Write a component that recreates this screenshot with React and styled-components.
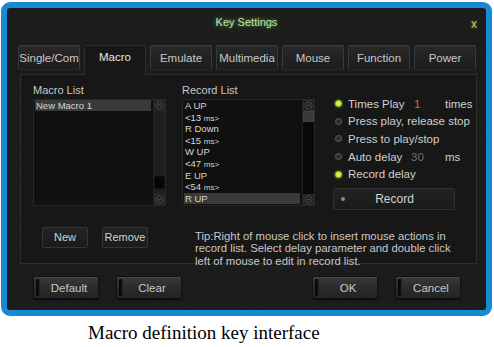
import styled, { createGlobalStyle } from 'styled-components'

const GlobalStyle = createGlobalStyle`
  html, body {
    margin: 0;
    padding: 0;
    background: #fff;
  }
  body {
    font-family: "Liberation Sans", Arial, sans-serif;
  }
`

const Page = styled.div`
  width: 494px;
  height: 347px;
  overflow: hidden;
  background: #fff;
`

const Frame = styled.div`
  margin: 2px 0 0 1px;
  width: 479px;
  height: 302px;
  border: 6px solid #1a89d4;
  border-radius: 9px;
  background-color: #1b1b1b;
  background-image: repeating-linear-gradient(45deg, rgba(255,255,255,0.012) 0 1px, transparent 1px 3px);
  display: flex;
  flex-direction: column;
  color: #d4d4d4;
`

const TitleBar = styled.div`
  display: grid;
  grid-template-columns: 1fr auto 1fr;
  height: 37px;
  padding-top: 8px;
  box-sizing: border-box;
`

const Title = styled.div`
  grid-column: 2;
  font-size: 11px;
  line-height: 12px;
  color: #c6dcb4;
  text-shadow: 0 0 6px rgba(110, 190, 50, 0.8), 0 0 2px rgba(90, 160, 40, 0.6);
`

const Close = styled.div`
  grid-column: 3;
  justify-self: end;
  margin: 2px 9px 0 0;
  font-size: 12px;
  line-height: 12px;
  color: #b4d83a;
  text-shadow: 0 0 3px rgba(150, 200, 40, 0.6);
`

const TabRow = styled.div`
  display: flex;
  align-items: flex-start;
  gap: 4px;
  height: 30px;
  padding-left: 11px;
  position: relative;
  z-index: 1;
`

const Tab = styled.div`
  width: 62px;
  height: ${p => (p.$active ? '31px' : '25px')};
  box-sizing: border-box;
  display: flex;
  align-items: ${p => (p.$active ? 'flex-start' : 'center')};
  padding-top: ${p => (p.$active ? '5px' : '0')};
  justify-content: center;
  font-size: 11.5px;
  color: ${p => (p.$active ? '#e6e6e6' : '#c8c8c8')};
  border: 1px solid ${p => (p.$active ? '#2e2e2e' : '#3a3a3a')};
  border-bottom: ${p => (p.$active ? 'none' : '1px solid #2a2a2a')};
  border-radius: 2px 2px ${p => (p.$active ? '0 0' : '2px 2px')};
  background: ${p => (p.$active ? '#171717' : 'linear-gradient(#282828, #1c1c1c)')};
  box-shadow: ${p => (p.$active ? 'none' : 'inset 0 1px 0 rgba(255,255,255,0.05)')};
`

const Panel = styled.div`
  margin: -1px 9px 0 13px;
  height: 190px;
  box-sizing: border-box;
  border: 1px solid #2e2e2e;
  background: #171717;
  padding: 9px 0 0 12px;
`

const Columns = styled.div`
  display: grid;
  grid-template-columns: 133px 133px 1fr;
  column-gap: 16px;
`

const Column = styled.div`
  display: flex;
  flex-direction: column;
`

const Label = styled.div`
  font-size: 11px;
  line-height: 12px;
  color: #c8c8c8;
  margin-bottom: 3px;
`

const ListBox = styled.div`
  height: 107px;
  display: flex;
  background: #101010;
  border: 1px solid #262626;
  box-sizing: border-box;
`

const Items = styled.div`
  flex: 1;
  padding: 0 2px 0 1px;
  overflow: hidden;
`

const Item = styled.div`
  font-size: 9.5px;
  line-height: 11.6px;
  height: ${p => (p.$tall ? '11px' : '11.6px')};
  padding-left: 1px;
  color: #d6d6d6;
  white-space: nowrap;
  background: ${p => (p.$selected ? '#3a3a3a' : 'transparent')};
`

const Small = styled.span`
  font-size: 8px;
`

const ScrollBar = styled.div`
  width: 11px;
  display: flex;
  flex-direction: column;
  background: ${p => (p.$light ? '#1f1f1f' : '#090909')};
  border-left: 1px solid #222;
`

const Arrow = styled.div`
  height: 11px;
  display: flex;
  align-items: center;
  justify-content: center;
  background: #1e1e1e;
  border: 1px solid #2c2c2c;
  box-sizing: border-box;
`

const Track = styled.div`
  flex: 1;
  display: flex;
  flex-direction: column;
  justify-content: ${p => (p.$end ? 'flex-end' : 'flex-start')};
  padding: ${p => (p.$end ? '0 0 5px' : '0')};
`

const Thumb = styled.div`
  height: ${p => p.$h}px;
  background: ${p => p.$color};
  border: 1px solid ${p => p.$border};
  box-sizing: border-box;
`

const Options = styled.div`
  display: flex;
  flex-direction: column;
  padding: 11px 0 0 2px;
`

const Option = styled.div`
  display: flex;
  align-items: center;
  height: 17.6px;
  font-size: 11.5px;
  color: #cfcfcf;
  white-space: nowrap;
`

const Dot = styled.span`
  width: 7px;
  height: 7px;
  border-radius: 50%;
  margin: 0 6px 0 2px;
  box-sizing: border-box;
  background: ${p => (p.$on ? 'radial-gradient(circle, #d4f04a 0 35%, #8fb81c 70%, #3d5410 100%)' : 'radial-gradient(circle, #2a2a2a 0 30%, #505050 60%, #2c2c2c 100%)')};
  box-shadow: ${p => (p.$on ? '0 0 3px rgba(170, 220, 40, 0.6)' : 'none')};
`

const OptLabel = styled.span`
  width: 63px;
`

const Value = styled.span`
  width: 34px;
  color: ${p => p.$color};
  padding-left: ${p => p.$pad}px;
  box-sizing: border-box;
`

const RecordButton = styled.div`
  margin-top: 5px;
  width: 122px;
  height: 22px;
  box-sizing: border-box;
  display: flex;
  align-items: center;
  border: 1px solid #303030;
  border-radius: 2px;
  background: linear-gradient(#222, #1a1a1a);
  font-size: 12px;
  color: #d2d2d2;
`

const SmallDot = styled.span`
  width: 4px;
  height: 4px;
  border-radius: 50%;
  background: #8a8a8a;
  margin-left: 7px;
`

const ButtonText = styled.span`
  flex: 1;
  text-align: center;
  padding-right: ${p => p.$pr || 0}px;
`

const BottomRow = styled.div`
  display: flex;
  margin-top: 17px;
`

const ListButtons = styled.div`
  width: 133px;
  box-sizing: border-box;
  padding-left: 9px;
  display: flex;
  gap: 14px;
`

const SmallButton = styled.div`
  width: 46px;
  height: 21px;
  box-sizing: border-box;
  display: flex;
  align-items: center;
  justify-content: center;
  border: 1px solid #363636;
  border-radius: 2px;
  background: linear-gradient(#232323, #1b1b1b);
  font-size: 11px;
  color: #d2d2d2;
`

const Tip = styled.div`
  margin: 3px 0 0 29px;
  font-size: 11.3px;
  line-height: 12.5px;
  color: #c8c8c8;
  white-space: nowrap;
`

const Footer = styled.div`
  display: flex;
  justify-content: space-between;
  padding: 12px 25px 0 26px;
`

const ButtonGroup = styled.div`
  display: flex;
  gap: 17px;
`

const FooterButton = styled.div`
  width: 66px;
  height: 23px;
  box-sizing: border-box;
  display: flex;
  align-items: center;
  border: 1px solid #111;
  border-radius: 2px;
  background: linear-gradient(#3a3a3a, #2a2a2a 55%, #232323);
  box-shadow: inset 0 1px 0 rgba(255,255,255,0.07), 0 1px 1px rgba(0,0,0,0.6);
  font-size: 11.5px;
  color: #c8c8c8;
`

const Slot = styled.span`
  width: 4px;
  height: 17px;
  margin-left: 2px;
  border-radius: 1px;
  background: linear-gradient(90deg, #050505, #0e0e0e 60%, #2a2a2a);
`

const Caption = styled.div`
  margin-top: 6px;
  padding-left: 88px;
  font-family: "Liberation Serif", "Times New Roman", serif;
  font-size: 19px;
  line-height: 22px;
  color: #000;
`

const ArrowIcon = ({ up }) => (
  <svg width="9" height="9" viewBox="0 0 9 9">
    <circle cx="4.5" cy="4.5" r="3.5" fill="none" stroke="#4a4a4a" strokeWidth="1" />
    <path d={up ? 'M3 5.2 L4.5 3.7 L6 5.2' : 'M3 3.8 L4.5 5.3 L6 3.8'} fill="none" stroke="#6a6a6a" strokeWidth="1" />
  </svg>
)

const tabs = ['Single/Com', 'Macro', 'Emulate', 'Multimedia', 'Mouse', 'Function', 'Power']

const records = [
  ['A UP'],
  ['<13 ', 'ms>'],
  ['R Down'],
  ['<15 ', 'ms>'],
  ['W UP'],
  ['<47 ', 'ms>'],
  ['E UP'],
  ['<54 ', 'ms>'],
  ['R UP'],
]

export default function App() {
  return (
    <Page>
      <GlobalStyle />
      <Frame>
        <TitleBar>
          <Title>Key Settings</Title>
          <Close>x</Close>
        </TitleBar>
        <TabRow>
          {tabs.map(t => (
            <Tab key={t} $active={t === 'Macro'}>{t}</Tab>
          ))}
        </TabRow>
        <Panel>
          <Columns>
            <Column>
              <Label>Macro List</Label>
              <ListBox>
                <Items>
                  <Item $selected $tall>New Macro 1</Item>
                </Items>
                <ScrollBar $light>
                  <Arrow><ArrowIcon up /></Arrow>
                  <Track $end>
                    <Thumb $h={13} $color="#060606" $border="#111" />
                  </Track>
                  <Arrow><ArrowIcon /></Arrow>
                </ScrollBar>
              </ListBox>
            </Column>
            <Column>
              <Label>Record List</Label>
              <ListBox>
                <Items>
                  {records.map((r, i) => (
                    <Item key={i} $selected={i === records.length - 1}>
                      {r[0]}
                      {r[1] && <Small>{r[1]}</Small>}
                    </Item>
                  ))}
                </Items>
                <ScrollBar>
                  <Arrow><ArrowIcon up /></Arrow>
                  <Track>
                    <Thumb $h={11} $color="#3a3a3a" $border="#444" />
                  </Track>
                  <Arrow><ArrowIcon /></Arrow>
                </ScrollBar>
              </ListBox>
            </Column>
            <Options>
              <Option>
                <Dot $on />
                <OptLabel>Times Play</OptLabel>
                <Value $color="#e0642a" $pad={3}>1</Value>
                <span>times</span>
              </Option>
              <Option><Dot />Press play, release stop</Option>
              <Option><Dot />Press to play/stop</Option>
              <Option>
                <Dot />
                <OptLabel>Auto delay</OptLabel>
                <Value $color="#6e6e6e" $pad={0}>30</Value>
                <span>ms</span>
              </Option>
              <Option><Dot $on />Record delay</Option>
              <RecordButton>
                <SmallDot />
                <ButtonText $pr={10}>Record</ButtonText>
              </RecordButton>
            </Options>
          </Columns>
          <BottomRow>
            <ListButtons>
              <SmallButton>New</SmallButton>
              <SmallButton>Remove</SmallButton>
            </ListButtons>
            <Tip>
              Tip:Right of mouse click to insert mouse actions in<br />
              record list. Select delay parameter and double click<br />
              left of mouse to edit in record list.
            </Tip>
          </BottomRow>
        </Panel>
        <Footer>
          <ButtonGroup>
            <FooterButton><Slot /><ButtonText>Default</ButtonText></FooterButton>
            <FooterButton><Slot /><ButtonText>Clear</ButtonText></FooterButton>
          </ButtonGroup>
          <ButtonGroup>
            <FooterButton><Slot /><ButtonText>OK</ButtonText></FooterButton>
            <FooterButton><Slot /><ButtonText>Cancel</ButtonText></FooterButton>
          </ButtonGroup>
        </Footer>
      </Frame>
      <Caption>Macro definition key interface</Caption>
    </Page>
  )
}
